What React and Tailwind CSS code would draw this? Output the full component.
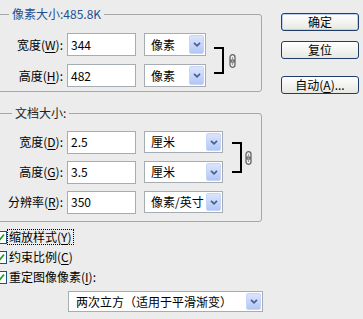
import React from "react";

function U({ children }) {
  return <span className="underline underline-offset-[2px] decoration-[1px]">{children}</span>;
}

function Arrow() {
  return (
    <div className="absolute right-[1px] top-[1px] bottom-[1px] w-[15px] rounded-[2px] border border-[#c6d5fb] bg-linear-to-b from-[#dbe5fd] to-[#b3c7f6] flex items-center justify-center">
      <svg width="8" height="5" viewBox="0 0 8 5">
        <path d="M1 0.8 L4 3.8 L7 0.8" stroke="#4a5f8f" strokeWidth="1.7" fill="none" />
      </svg>
    </div>
  );
}

function Field({ value }) {
  return (
    <div className="ml-[4px] w-[69px] h-[23px] bg-white border border-[#a5acb2] pl-[3px] flex items-center text-[12px] leading-[14px] text-black">
      {value}
    </div>
  );
}

function Label({ children }) {
  return <div className="w-[65px] text-right text-[12px] leading-[14px] text-black whitespace-nowrap">{children}</div>;
}

function Chain() {
  return (
    <svg width="7" height="14" viewBox="0 0 7 14" className="shrink-0">
      <rect x="1" y="0.7" width="5" height="7.5" rx="2.5" fill="none" stroke="#666" strokeWidth="1.3" />
      <rect x="1" y="5.8" width="5" height="7.5" rx="2.5" fill="none" stroke="#666" strokeWidth="1.3" />
      <line x1="3.5" y1="3" x2="3.5" y2="11" stroke="#999" strokeWidth="1" />
    </svg>
  );
}

function Btn({ children, def }) {
  return (
    <div
      className={
        def
          ? "w-[78px] h-[18px] rounded-[3px] border border-[#1f3d6b] bg-linear-to-b from-white to-[#e7e7e2] shadow-[inset_0_0_0_1px_#bdd0f4] flex items-center justify-center text-[12px] leading-[14px] text-black"
          : "w-[78px] h-[18px] rounded-[3px] border border-[#1f3d6b] bg-linear-to-b from-white to-[#e7e7e2] flex items-center justify-center text-[12px] leading-[14px] text-black"
      }
    >
      {children}
    </div>
  );
}

function Check() {
  return (
    <div className="w-[13px] h-[13px] bg-white border border-[#1c5180] flex items-center justify-end pr-[1px] shrink-0">
      <svg width="9" height="9" viewBox="0 0 9 9">
        <path d="M1 4.5 L3.5 7 L8 1.5" stroke="#21a121" strokeWidth="1.8" fill="none" />
      </svg>
    </div>
  );
}

export default function App() {
  return (
    <div className="w-[363px] h-[319px] bg-[#ececec] overflow-hidden flex items-start [font-family:'Noto_Sans_CJK_SC','Noto_Sans',sans-serif]">
      <div className="ml-[-3px] w-[265px] shrink-0 flex flex-col">
        {/* Group 1 */}
        <fieldset className="mt-[6px] border border-[#a7a7a7] rounded-[3px] pt-[11px] pb-[4px] min-w-0">
          <legend className="ml-[11px] px-[3px] text-[12px] leading-[16px] text-[#1e4f91]">像素大小:485.8K</legend>
          <div className="flex items-start">
            <div className="flex flex-col gap-[8px]">
              <div className="flex items-center h-[23px]">
                <Label>
                  宽度(<U>W</U>):
                </Label>
                <Field value="344" />
                <div className="relative ml-[8px] w-[62px] h-[23px] bg-white border border-[#a5acb2] pl-[6px] flex items-center text-[12px] leading-[14px]">
                  像素
                  <Arrow />
                </div>
              </div>
              <div className="flex items-center h-[23px]">
                <Label>
                  高度(<U>H</U>):
                </Label>
                <Field value="482" />
                <div className="relative ml-[8px] w-[62px] h-[23px] bg-white border border-[#a5acb2] pl-[6px] flex items-center text-[12px] leading-[14px]">
                  像素
                  <Arrow />
                </div>
              </div>
            </div>
            <div className="mt-[14px] ml-[8px] flex items-center">
              <div className="w-[10px] h-[27px] border-2 border-l-0 border-black"></div>
              <div className="ml-[5px]">
                <Chain />
              </div>
            </div>
          </div>
        </fieldset>

        {/* Group 2 */}
        <fieldset className="mt-[13px] border border-[#a7a7a7] rounded-[3px] pt-[10px] pb-[8px] min-w-0">
          <legend className="ml-[14px] px-[3px] text-[12px] leading-[16px] text-[#222]">文档大小:</legend>
          <div className="flex items-start">
            <div className="flex flex-col gap-[8px]">
              <div className="flex items-center h-[22px]">
                <Label>
                  宽度(<U>D</U>):
                </Label>
                <Field value="2.5" />
                <div className="relative ml-[8px] w-[79px] h-[22px] bg-white border border-[#a5acb2] pl-[6px] flex items-center text-[12px] leading-[14px]">
                  厘米
                  <Arrow />
                </div>
              </div>
              <div className="flex items-center h-[22px]">
                <Label>
                  高度(<U>G</U>):
                </Label>
                <Field value="3.5" />
                <div className="relative ml-[8px] w-[79px] h-[22px] bg-white border border-[#a5acb2] pl-[6px] flex items-center text-[12px] leading-[14px]">
                  厘米
                  <Arrow />
                </div>
              </div>
              <div className="flex items-center h-[22px]">
                <Label>
                  分辨率(<U>R</U>):
                </Label>
                <Field value="350" />
                <div className="relative ml-[8px] w-[79px] h-[22px] bg-white border border-[#a5acb2] pl-[6px] flex items-center text-[12px] leading-[14px]">
                  像素/英寸
                  <Arrow />
                </div>
              </div>
            </div>
            <div className="mt-[11px] ml-[9px] flex items-center">
              <div className="w-[10px] h-[31px] border-2 border-l-0 border-black"></div>
              <div className="ml-[3px]">
                <Chain />
              </div>
            </div>
          </div>
        </fieldset>

        {/* Checkboxes */}
        <div className="mt-[5px] ml-[-3px] flex flex-col">
          <div className="h-[20px] flex items-center">
            <Check />
            <span className="ml-[1px] px-[1px] text-[12px] leading-[14px] text-black outline-1 outline-dotted outline-black">
              缩放样式(<U>Y</U>)
            </span>
          </div>
          <div className="h-[20px] flex items-center">
            <Check />
            <span className="ml-[2px] text-[12px] leading-[14px] text-black">
              约束比例(<U>C</U>)
            </span>
          </div>
          <div className="h-[20px] flex items-center">
            <Check />
            <span className="ml-[2px] text-[12px] leading-[14px] text-black">
              重定图像像素(<U>I</U>):
            </span>
          </div>
        </div>

        <div className="relative mt-[4px] ml-[71px] w-[195px] h-[21px] bg-white border border-[#a5acb2] pl-[7px] flex items-center text-[12px] leading-[14px] text-black">
          两次立方（适用于平滑渐变）
          <Arrow />
        </div>
      </div>

      {/* Buttons */}
      <div className="ml-[19px] mt-[13px] flex flex-col">
        <Btn def>确定</Btn>
        <div className="mt-[10px]">
          <Btn>复位</Btn>
        </div>
        <div className="mt-[17px]">
          <Btn>
            自动(<U>A</U>)...
          </Btn>
        </div>
      </div>
    </div>
  );
}
